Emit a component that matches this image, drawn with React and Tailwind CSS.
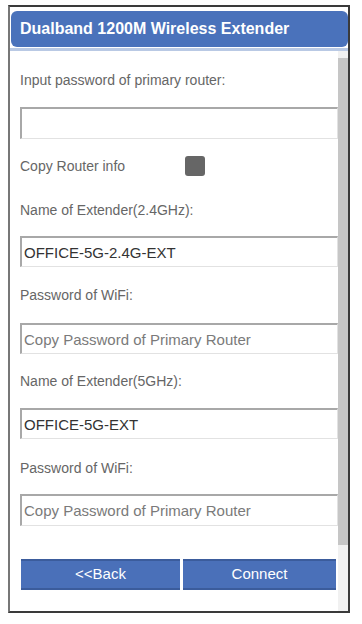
import React from "react";

const Label = ({ children, className = "" }) => (
  <div className={`h-4 leading-4 text-[14px] text-[#666] ${className}`}>{children}</div>
);

const Field = ({ value, placeholder, className = "" }) => (
  <input
    readOnly
    defaultValue={value}
    placeholder={placeholder}
    className={`block w-full h-[31px] pl-[2px] text-[15px] text-[#333] bg-white outline-none border-t-2 border-l-2 border-r border-b border-t-[#a8a8a8] border-l-[#a8a8a8] border-r-[#e2e2e2] border-b-[#e2e2e2] placeholder:text-[#7a7a7a] ${className}`}
  />
);

export default function App() {
  return (
    <div
      className="w-[362px] h-[624px] bg-white pt-[5px] pl-[8px]"
      style={{ fontFamily: '"Liberation Sans", Arial, sans-serif' }}
    >
      <div className="w-[342px] h-[608px] border-2 border-[#3a3a3a] border-l-[#777] flex flex-col">
        {/* Header */}
        <div className="mt-[4px] ml-[1px] h-[36px] rounded-[6px] bg-[#4a72bb] flex items-center pl-[9px]">
          <span className="text-[16px] font-bold text-white">Dualband 1200M Wireless Extender</span>
        </div>
        <div className="mt-[1px] h-[3px] bg-[#b9c9e4]" />

        {/* Body */}
        <div className="flex flex-1 min-h-0">
          <div className="flex-1 pl-[10px] pt-[21px]">
            <Label>Input password of primary router:</Label>
            <Field className="mt-[19px] h-[32px]" />

            <div className="mt-[17px] flex items-center h-5">
              <span className="w-[165px] text-[14px] text-[#666]">Copy Router info</span>
              <div className="w-5 h-5 rounded-[3px] bg-[#666]" />
            </div>

            <Label className="mt-[26px]">Name of Extender(2.4GHz):</Label>
            <Field className="mt-[18px] h-[30px]" value="OFFICE-5G-2.4G-EXT" />

            <Label className="mt-[20px]">Password of WiFi:</Label>
            <Field className="mt-[20px]" placeholder="Copy Password of Primary Router" />

            <Label className="mt-[19px]">Name of Extender(5GHz):</Label>
            <Field className="mt-[19px] h-[30px]" value="OFFICE-5G-EXT" />

            <Label className="mt-[21px]">Password of WiFi:</Label>
            <Field className="mt-[18px] h-[32px]" placeholder="Copy Password of Primary Router" />

            <div className="mt-[33px] flex gap-[3px] pl-[1px] pr-[2px]">
              <button className="w-[159px] h-[31px] bg-[#4a70b9] border-y-2 border-[#3b5c9c] text-white text-[15px]">
                &lt;&lt;Back
              </button>
              <button className="flex-1 h-[31px] bg-[#4a70b9] border-y-2 border-[#3b5c9c] text-white text-[15px]">
                Connect
              </button>
            </div>
          </div>

          {/* Scrollbar */}
          <div className="w-[10px] bg-[#f1f1f1] pt-[7px]">
            <div className="h-[487px] bg-[#c6c6c6]" />
          </div>
        </div>
      </div>
    </div>
  );
}
